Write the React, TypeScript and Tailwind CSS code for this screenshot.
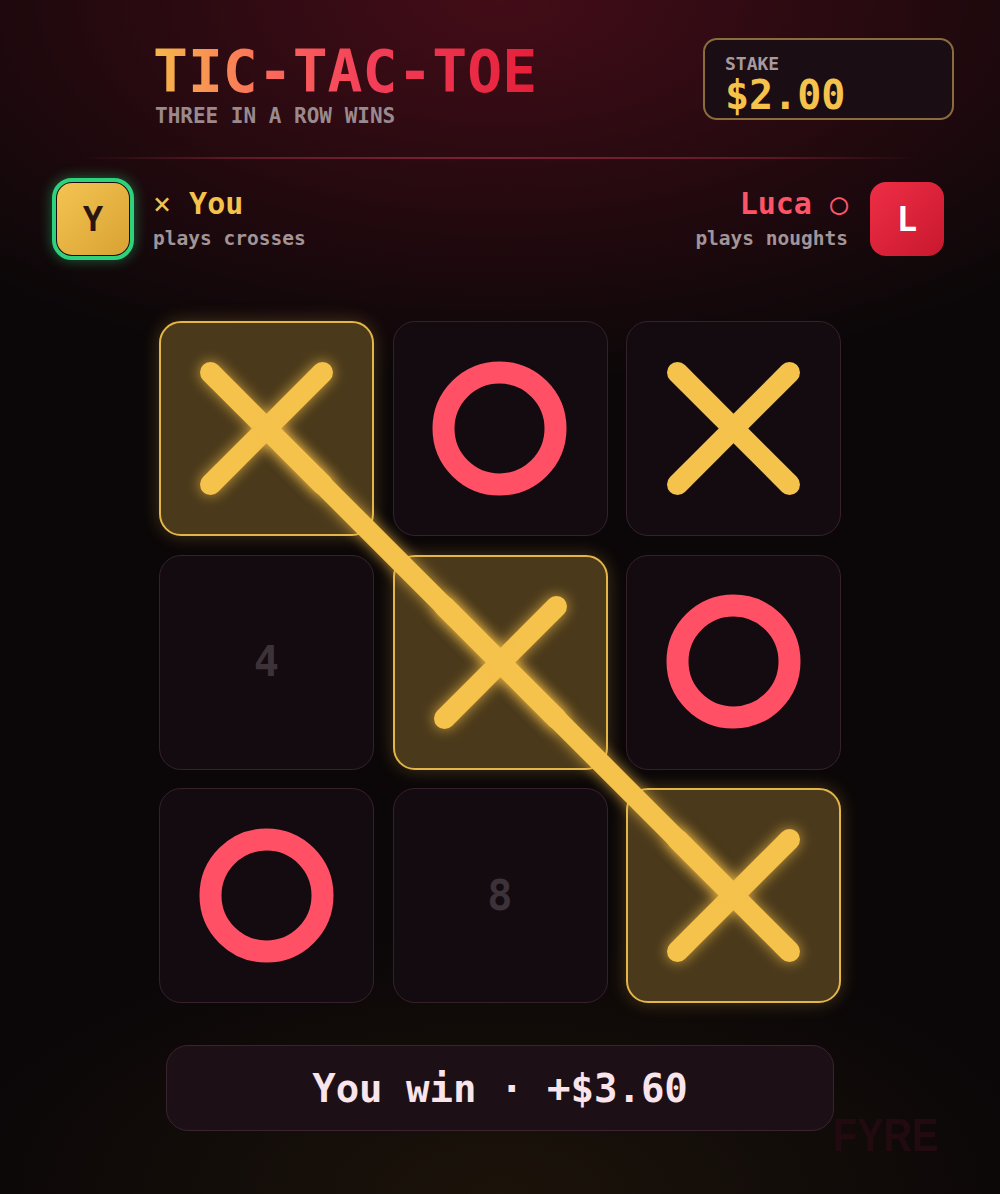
import React from "react";

type Cell = "X" | "O" | number;

const board: Cell[] = ["X", "O", "X", 4, "X", "O", "O", 8, "X"];
const winning = [0, 4, 8];

function XMark({ glow }: { glow: boolean }) {
  return (
    <svg
      width="215"
      height="215"
      viewBox="0 0 215 215"
      className={glow ? "absolute -inset-[2px] drop-shadow-[0_0_7px_rgba(245,192,74,0.75)]" : "absolute -inset-[1.5px]"}
    >
      <line x1="51.5" y1="51.5" x2="163.5" y2="163.5" stroke="#f5c24c" strokeWidth="21" strokeLinecap="round" />
      <line x1="163.5" y1="51.5" x2="51.5" y2="163.5" stroke="#f5c24c" strokeWidth="21" strokeLinecap="round" />
    </svg>
  );
}

function OMark() {
  return (
    <svg width="215" height="215" viewBox="0 0 215 215" className="absolute -inset-[1.5px]">
      <circle cx="107.5" cy="107.5" r="56" fill="none" stroke="#ff5066" strokeWidth="22" />
    </svg>
  );
}

function CellView({ value, win }: { value: Cell; win: boolean }) {
  const base = "relative w-[215px] h-[215px] rounded-[22px] flex items-center justify-center";
  const style = win
    ? "bg-[#4a391b] border-2 border-[#e4b548] shadow-[0_0_18px_rgba(245,192,74,0.25)]"
    : "bg-[#140b11] border-[1.5px] border-[#36212b]";
  return (
    <div className={`${base} ${style}`}>
      {value === "X" && <XMark glow={win} />}
      {value === "O" && <OMark />}
      {typeof value === "number" && (
        <span className="text-[42px] font-bold leading-none text-[#3d3238]">{value}</span>
      )}
    </div>
  );
}

export default function App() {
  return (
    <div className="relative w-full min-h-[1194px] overflow-hidden bg-[#0b0708] bg-[radial-gradient(ellipse_75%_32%_at_50%_0%,rgba(105,16,34,0.6),transparent),radial-gradient(ellipse_55%_22%_at_50%_100%,rgba(70,50,15,0.28),transparent)] font-['DejaVu_Sans_Mono',monospace] font-bold">
      {/* Header */}
      <div className="flex justify-between items-start pt-[38px] pl-[153px] pr-[46px]">
        <div className="mt-[5px] flex flex-col">
          <div className="text-[58px] leading-none bg-[linear-gradient(90deg,#f6b84a_0%,#fb6a5c_30%,#f4405a_55%,#e51f3a_100%)] bg-clip-text text-transparent">
            TIC-TAC-TOE
          </div>
          <div className="mt-[5px] pl-[2px] text-[21px] leading-none text-[#9a898d]">THREE IN A ROW WINS</div>
        </div>
        <div className="w-[251px] h-[82px] rounded-[14px] border-2 border-[#8c6b3d] bg-[#1a0d13] pl-[20px] pt-[15px] flex flex-col">
          <div className="text-[18px] leading-none text-[#a8999d]">STAKE</div>
          <div className="text-[40px] leading-none text-[#f5c24c] mt-[2px]">$2.00</div>
        </div>
      </div>

      {/* Divider */}
      <div className="mx-[80px] mt-[30px] h-[2px] bg-[linear-gradient(90deg,transparent,rgba(150,40,60,0.55)_20%,rgba(160,45,65,0.7)_50%,rgba(150,40,60,0.55)_80%,transparent)]" />

      {/* Players */}
      <div className="flex justify-between items-center mt-[19px] pl-[52px] pr-[56px]">
        <div className="flex items-center gap-[19px]">
          <div className="w-[82px] h-[82px] rounded-[20px] border-[4px] border-[#2fd27c] bg-[#1a0c0c] p-[1px] shadow-[0_0_14px_rgba(47,210,124,0.45)]">
            <div className="w-full h-full rounded-[15px] bg-[linear-gradient(135deg,#f3c452,#d9a233)] flex items-center justify-center text-[34px] leading-none text-[#2a1610]">
              Y
            </div>
          </div>
          <div className="flex flex-col">
            <div className="text-[30px] leading-none text-[#f5c24c]">
              <span className="font-normal">×</span> You
            </div>
            <div className="mt-[10px] text-[19.5px] leading-none text-[#a39497]">plays crosses</div>
          </div>
        </div>
        <div className="flex items-center gap-[22px]">
          <div className="flex flex-col items-end">
            <div className="text-[30px] leading-none text-[#ff5468]">
              Luca <span className="font-normal">○</span>
            </div>
            <div className="mt-[10px] text-[19.5px] leading-none text-[#a39497]">plays noughts</div>
          </div>
          <div className="w-[74px] h-[74px] rounded-[16px] bg-[linear-gradient(135deg,#ee2e46,#c8182e)] flex items-center justify-center text-[34px] leading-none text-white">
            L
          </div>
        </div>
      </div>

      {/* Board */}
      <div className="flex justify-center mt-[61px]">
        <div className="relative grid grid-cols-[215px_215px_215px] gap-[18.5px]">
          {board.map((v, i) => (
            <CellView key={i} value={v} win={winning.includes(i)} />
          ))}
          <svg
            width="682"
            height="682"
            viewBox="0 0 682 682"
            className="absolute left-0 top-0 pointer-events-none drop-shadow-[0_0_7px_rgba(245,192,74,0.75)]"
          >
            <line x1="107.5" y1="107.5" x2="574.5" y2="574.5" stroke="#f5c24c" strokeWidth="20" strokeLinecap="round" />
          </svg>
        </div>
      </div>

      {/* Result */}
      <div className="flex justify-center mt-[42px]">
        <div className="w-[668px] h-[86px] rounded-[22px] bg-[#1d0f16] border-[1.5px] border-[#3a2430] flex items-center justify-center text-[39px] leading-none text-[#f8e4ea]">
          You win · +$3.60
        </div>
      </div>

      {/* Watermark */}
      <div className="absolute left-[833px] top-[1112px] origin-left scale-x-[0.86] font-['Liberation_Sans',sans-serif] font-bold text-[46px] leading-none text-[#220b10]">
        FYRE
      </div>
    </div>
  );
}
